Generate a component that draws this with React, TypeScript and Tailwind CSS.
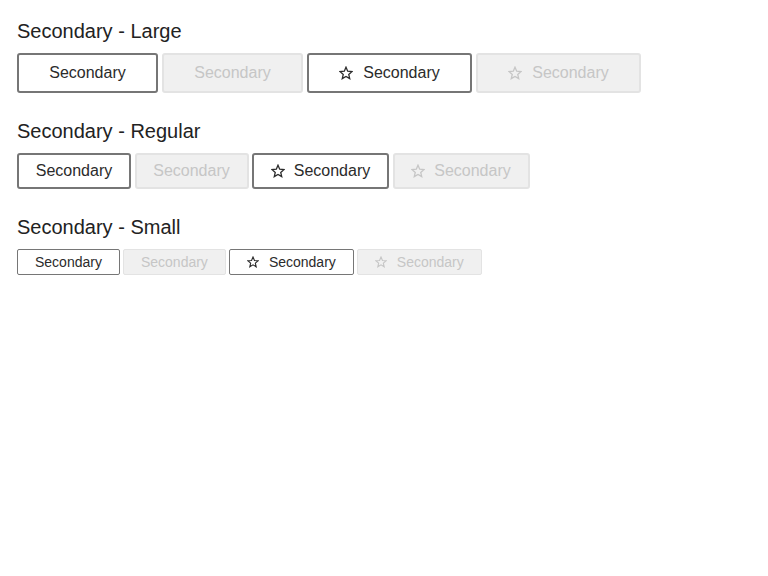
type Size = 'large' | 'regular' | 'small';

const sizeClasses: Record<Size, string> = {
  large: 'border-2 px-[30.25px] py-[9px] text-[16px] leading-[18px] rounded-[3px]',
  regular: 'border-2 px-[16.75px] py-[7px] text-[16px] leading-[18px] rounded-[3px]',
  small: 'border px-[17px] py-[4px] text-[14px] leading-[16px] rounded-[2px]',
};

const rowGap: Record<Size, string> = {
  large: 'gap-[4px]',
  regular: 'gap-[3.5px]',
  small: 'gap-[3px]',
};

const iconClasses: Record<Size, string> = {
  large: 'w-[14px] h-[14px] mr-[10px]',
  regular: 'w-[14px] h-[14px] mr-[9px]',
  small: 'w-[12px] h-[12px] mr-[10px]',
};

function StarIcon({ className }: { className: string }) {
  return (
    <svg viewBox="0 0 24 24" className={className} fill="none" stroke="currentColor" strokeWidth="2.2" strokeLinejoin="miter">
      <polygon points="12,2 14.9,8.9 22.3,9.5 16.7,14.4 18.4,21.6 12,17.8 5.6,21.6 7.3,14.4 1.7,9.5 9.1,8.9" />
    </svg>
  );
}

function SecondaryButton({ size, disabled, icon }: { size: Size; disabled?: boolean; icon?: boolean }) {
  const state = disabled
    ? 'bg-[#f0f0f0] border-[#e3e3e3] text-[#c6c6c6]'
    : 'bg-white border-[#767676] text-[#2b2b2b]';
  return (
    <button disabled={disabled} className={`inline-flex items-center whitespace-nowrap ${sizeClasses[size]} ${state}`}>
      {icon && <StarIcon className={iconClasses[size]} />}
      Secondary
    </button>
  );
}

function Section({ title, size }: { title: string; size: Size }) {
  return (
    <section>
      <h2 className="text-[20px] leading-6 text-[#222] mb-[10px]">{title}</h2>
      <div className={`flex items-center ${rowGap[size]}`}>
        <SecondaryButton size={size} />
        <SecondaryButton size={size} disabled />
        <SecondaryButton size={size} icon />
        <SecondaryButton size={size} icon disabled />
      </div>
    </section>
  );
}

export default function App() {
  return (
    <div className="min-h-[576px] bg-white px-[17px] pt-[19px] font-['Liberation_Sans',Arial,sans-serif] flex flex-col gap-[26px]">
      <Section title="Secondary - Large" size="large" />
      <Section title="Secondary - Regular" size="regular" />
      <Section title="Secondary - Small" size="small" />
    </div>
  );
}
